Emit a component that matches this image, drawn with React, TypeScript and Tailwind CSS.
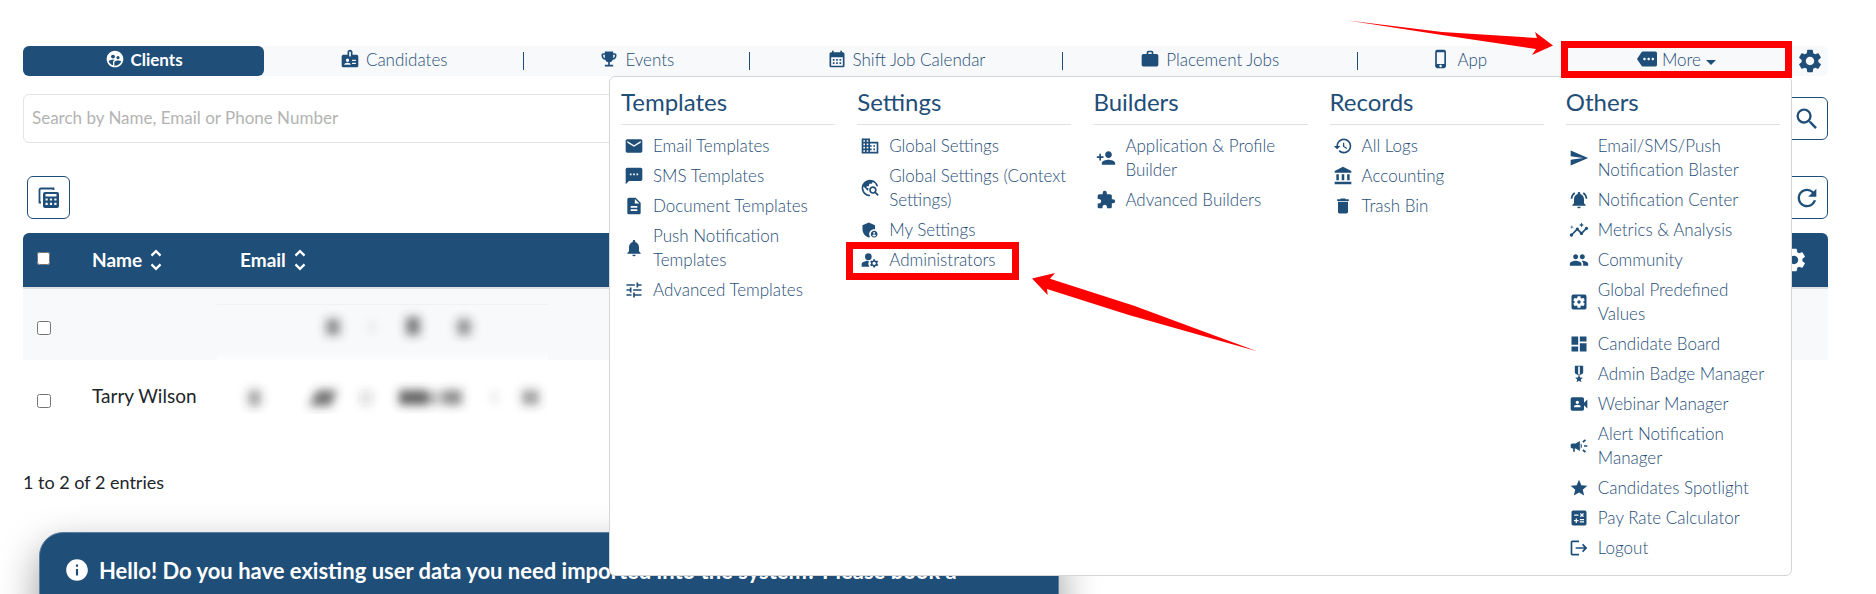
import { useState, type ComponentType, type ReactNode } from "react";
import {
  MdAccountBalance,
  MdAdminPanelSettings,
  MdCalculate,
  MdCalendarMonth,
  MdCampaign,
  MdDashboard,
  MdDelete,
  MdDescription,
  MdDomain,
  MdEmail,
  MdEmojiEvents,
  MdExtension,
  MdHistory,
  MdInfo,
  MdInsights,
  MdLogout,
  MdManageAccounts,
  MdMilitaryTech,
  MdMore,
  MdNotifications,
  MdNotificationsActive,
  MdPeople,
  MdPersonAdd,
  MdPhoneIphone,
  MdRefresh,
  MdSearch,
  MdSend,
  MdSettings,
  MdSettingsApplications,
  MdSms,
  MdStar,
  MdSupervisedUserCircle,
  MdTravelExplore,
  MdTune,
  MdUnfoldMore,
  MdVideoCameraFront,
  MdWork
} from "react-icons/md";

type IconType = ComponentType<{ className?: string }>;

type MenuLink = {
  label: string;
  icon: IconType;
  highlighted?: boolean;
};

type MenuGroup = {
  title: string;
  links: MenuLink[];
};

const menuGroups: MenuGroup[] = [
  {
    title: "Templates",
    links: [
      { label: "Email Templates", icon: MdEmail },
      { label: "SMS Templates", icon: MdSms },
      { label: "Document Templates", icon: MdDescription },
      { label: "Push Notification\nTemplates", icon: MdNotifications },
      { label: "Advanced Templates", icon: MdTune }
    ]
  },
  {
    title: "Settings",
    links: [
      { label: "Global Settings", icon: MdDomain },
      { label: "Global Settings (Context\nSettings)", icon: MdTravelExplore },
      { label: "My Settings", icon: MdAdminPanelSettings },
      { label: "Administrators", icon: MdManageAccounts, highlighted: true }
    ]
  },
  {
    title: "Builders",
    links: [
      { label: "Application & Profile\nBuilder", icon: MdPersonAdd },
      { label: "Advanced Builders", icon: MdExtension }
    ]
  },
  {
    title: "Records",
    links: [
      { label: "All Logs", icon: MdHistory },
      { label: "Accounting", icon: MdAccountBalance },
      { label: "Trash Bin", icon: MdDelete }
    ]
  },
  {
    title: "Others",
    links: [
      { label: "Email/SMS/Push\nNotification Blaster", icon: MdSend },
      { label: "Notification Center", icon: MdNotificationsActive },
      { label: "Metrics & Analysis", icon: MdInsights },
      { label: "Community", icon: MdPeople },
      { label: "Global Predefined\nValues", icon: MdSettingsApplications },
      { label: "Candidate Board", icon: MdDashboard },
      { label: "Admin Badge Manager", icon: MdMilitaryTech },
      { label: "Webinar Manager", icon: MdVideoCameraFront },
      { label: "Alert Notification\nManager", icon: MdCampaign },
      { label: "Candidates Spotlight", icon: MdStar },
      { label: "Pay Rate Calculator", icon: MdCalculate },
      { label: "Logout", icon: MdLogout }
    ]
  }
];

export default function App() {
  const [menuOpen, setMenuOpen] = useState(true);

  return (
    <main className="h-screen overflow-hidden bg-white pt-[46px] pr-12 pl-[23px] font-[Lato,sans-serif] text-[17px] text-[#1f4e78]">
      <nav className="relative z-10 flex h-[30px] rounded-md bg-[#f7f9fb] leading-7">
        <a href="#clients" className="flex flex-[241] items-start justify-center gap-1.5 rounded-md bg-[#1f4e78] font-bold text-white">
          <MdSupervisedUserCircle className="mt-[3px] size-5" />
          Clients
        </a>
        <NavItem className="flex-[260]" icon={BadgeIcon} label="Candidates" divider />
        <NavItem className="flex-[226]" icon={MdEmojiEvents} label="Events" divider />
        <NavItem className="flex-[312]" icon={MdCalendarMonth} label="Shift Job Calendar" divider />
        <NavItem className="flex-[295]" icon={MdWork} label="Placement Jobs" divider />
        <NavItem className="flex-[203]" icon={MdPhoneIphone} label="App" />
        <div className="relative flex flex-[231]">
          <button
            type="button"
            aria-expanded={menuOpen}
            className="flex flex-1 items-start justify-center gap-[5px] font-light"
            onClick={() => setMenuOpen((open) => !open)}
          >
            <MdMore className="mt-[3px] size-5" />
            More
            <svg className="mt-3.5 h-[5px] w-2.5" viewBox="0 0 10 5" fill="currentColor" aria-hidden="true">
              <path d="M0 0h10L5 5z" />
            </svg>
          </button>
          <span className="pointer-events-none absolute inset-x-0 -top-[5px] -bottom-0.5 z-20 border-[7px] border-[#ff0000]" />
          <svg className="pointer-events-none absolute -top-[26px] -left-[213px] z-20 h-9 w-[205px]" viewBox="0 0 205 36" fill="#ff0000" aria-hidden="true">
            <path d="M0 .5 94 12l95 6-2-6 18 13.5L184 35l4-6L94 15z" />
          </svg>
        </div>
        <button type="button" aria-label="Menu settings" className="flex w-9 items-center justify-center">
          <MdSettings className="size-7" />
        </button>
        {menuOpen ? <MegaMenu /> : null}
      </nav>

      <form className="mt-[18px] flex items-center gap-2.5" onSubmit={(event) => event.preventDefault()}>
        <input
          type="search"
          aria-label="Search by Name, Email or Phone Number"
          placeholder="Search by Name, Email or Phone Number"
          className="h-[49px] min-w-0 flex-1 rounded-md border border-[#e2e4e6] px-2 pb-0.5 outline-none placeholder:text-[#b3b3b3] focus:border-[#1f4e78]"
        />
        <IconButton label="Search" submit>
          <MdSearch className="size-7" />
        </IconButton>
      </form>

      <div className="mt-[33px] flex justify-between pl-1">
        <IconButton label="Choose columns">
          <TableStackIcon className="size-6" />
        </IconButton>
        <IconButton label="Refresh">
          <MdRefresh className="size-7" />
        </IconButton>
      </div>

      <table className="mt-3.5 w-full table-fixed text-left text-[19px] leading-7">
        <thead>
          <tr className="h-[55px] border-b-2 border-[#dee2e6] bg-[#1f4e78] text-white">
            <th className="w-[57px] rounded-tl-md pl-3.5 align-middle">
              <input type="checkbox" aria-label="Select all clients" className="mb-2 size-[13px] align-middle" />
            </th>
            <th className="w-[148px] px-3">
              <SortButton label="Name" />
            </th>
            <th className="px-3">
              <SortButton label="Email" />
            </th>
            <th className="w-20 rounded-tr-md pr-5">
              <button type="button" aria-label="Table settings" className="ml-auto block">
                <MdSettings className="size-7" />
              </button>
            </th>
          </tr>
        </thead>
        <tbody className="text-[#212529]">
          <tr className="h-[72px] bg-[#f7f9fb]">
            <td className="pt-0.5 pl-3.5">
              <RowCheckbox label="Select first client" />
            </td>
            <td className="px-3" />
            <td className="relative px-3">
              <RedactedEmails />
            </td>
            <td />
          </tr>
          <tr className="h-[72px]">
            <td className="pt-1.5 pl-3.5">
              <RowCheckbox label="Select Tarry Wilson" />
            </td>
            <td className="px-3 whitespace-nowrap">Tarry Wilson</td>
            <td />
            <td />
          </tr>
        </tbody>
      </table>

      <p className="mt-[38px] text-lg leading-6 text-[#212529]">1 to 2 of 2 entries</p>

      <section className="mt-[38px] ml-4 flex min-h-40 w-[1020px] items-start gap-[9px] rounded-3xl border border-[#5b7f9f] bg-[#1f4e78] px-6 pt-6 text-white shadow-[0_16px_40px_rgba(0,0,0,0.4)]">
        <MdInfo className="size-[26px] shrink-0" />
        <p className="text-[22px] leading-7 font-bold whitespace-nowrap">Hello! Do you have existing user data you need imported into the system? Please book a</p>
      </section>
    </main>
  );
}

function NavItem({ className, icon: Icon, label, divider }: { className: string; icon: IconType; label: string; divider?: boolean }) {
  return (
    <div className={`flex items-center ${className}`}>
      <a href="#" className="flex h-full flex-1 items-start justify-center gap-1.5 font-light">
        <Icon className="mt-[3px] size-5" />
        {label}
      </a>
      {divider ? <span className="h-[18px] w-px bg-[#1f4e78]" /> : null}
    </div>
  );
}

function MegaMenu() {
  return (
    <div className="absolute top-full right-9 grid w-[1183px] grid-cols-5 rounded-md border border-[#d3d6d9] bg-white pt-2.5 pb-3">
      {menuGroups.map((group) => (
        <div key={group.title} className="px-[11px]">
          <h2 className="border-b border-[#dee2e6] pb-[7px] text-2xl leading-[30px]">{group.title}</h2>
          <ul className="mt-1.5">
            {group.links.map(({ label, icon: Icon, highlighted }) => (
              <li key={label} className="relative">
                <a href="#" className="flex items-center gap-[9px] py-[3px] pl-[3px] leading-6 font-light whitespace-pre">
                  <Icon className="size-5 shrink-0" />
                  {label}
                </a>
                {highlighted ? <Callout /> : null}
              </li>
            ))}
          </ul>
        </div>
      ))}
    </div>
  );
}

function Callout() {
  return (
    <>
      <span className="pointer-events-none absolute -top-[3px] -left-[11px] h-[38px] w-[173px] border-[7px] border-[#ff0000]" />
      <svg className="pointer-events-none absolute top-7 left-[175px] h-20 w-[226px]" viewBox="0 0 226 80" fill="#ff0000" aria-hidden="true">
        <path d="M0 5.5 23 0l-5 5.700 84 27 123 45.500-129-36.500L15 16l.7 6z" />
      </svg>
    </>
  );
}

function IconButton({ label, submit, children }: { label: string; submit?: boolean; children: ReactNode }) {
  return (
    <button
      type={submit ? "submit" : "button"}
      aria-label={label}
      className="flex size-[43px] shrink-0 items-center justify-center rounded-md border border-[#1f4e78] bg-white"
    >
      {children}
    </button>
  );
}

function SortButton({ label }: { label: string }) {
  return (
    <button type="button" className="flex items-center font-bold">
      {label}
      <MdUnfoldMore className="size-7" />
    </button>
  );
}

function RowCheckbox({ label }: { label: string }) {
  return <input type="checkbox" aria-label={label} className="size-3.5 align-middle" />;
}

// Smudges that stand in for the hidden addresses of both rows.
function RedactedEmails() {
  return (
    <svg className="pointer-events-none absolute top-3.5 -left-[11px] h-[111px] w-[331px]" viewBox="0 0 331 111" aria-hidden="true">
      <defs>
        <filter id="smudge" x="-50%" y="-50%" width="200%" height="200%">
          <feGaussianBlur stdDeviation="5" />
        </filter>
        <linearGradient id="fade" x1="0" y1="0" x2="0" y2="1">
          <stop offset="0" stopColor="#fff" stopOpacity="0" />
          <stop offset="1" stopColor="#fff" />
        </linearGradient>
      </defs>
      <path d="M0 1.500h331" stroke="#eff1f3" />
      <rect y="48" width="331" height="12" fill="url(#fade)" />
      <g fill="#333" filter="url(#smudge)">
        <rect x="109" y="16" width="14" height="16" opacity=".55" />
        <rect x="152" y="18" width="6" height="12" opacity=".08" />
        <rect x="189" y="14" width="14" height="18" opacity=".64" />
        <rect x="240" y="16" width="14" height="16" opacity=".5" />
        <rect x="31" y="87" width="13" height="16" opacity=".44" />
        <path d="M92 103l8-16h20l-6 16z" opacity=".68" />
        <rect x="143" y="88" width="12" height="14" opacity=".16" />
        <rect x="182" y="87" width="28" height="15" opacity=".74" />
        <rect x="206" y="88" width="16" height="14" opacity=".35" />
        <rect x="225" y="87" width="20" height="15" opacity=".55" />
        <rect x="275" y="89" width="5" height="12" opacity=".12" />
        <rect x="305" y="87" width="17" height="15" opacity=".46" />
      </g>
    </svg>
  );
}

function BadgeIcon({ className }: { className?: string }) {
  return (
    <svg className={className} viewBox="0 0 24 24" fill="currentColor" aria-hidden="true">
      <path
        fillRule="evenodd"
        d="M12 1a3 3 0 0 0-3 3v3H4a2 2 0 0 0-2 2v11a2 2 0 0 0 2 2h16a2 2 0 0 0 2-2V9a2 2 0 0 0-2-2h-5V4a3 3 0 0 0-3-3zm0 2a1 1 0 0 1 1 1v4a1 1 0 0 1-2 0V4a1 1 0 0 1 1-1zM9 11.500a2 2 0 1 1 0 4 2 2 0 0 1 0-4zM5 19c0-1.600 2-2.500 4-2.500s4 .9 4 2.500zM14.500 13H19v1.500h-4.500zM14.500 16.500H19V18h-4.500z"
      />
    </svg>
  );
}

function TableStackIcon({ className }: { className?: string }) {
  return (
    <svg className={className} viewBox="0 0 24 24" aria-hidden="true">
      <path d="M4 16.500H2.500V4A1.500 1.500 0 0 1 4 2.500h12.500V4" fill="none" stroke="currentColor" strokeWidth="1.800" />
      <path
        fill="currentColor"
        fillRule="evenodd"
        d="M8 6h12a2 2 0 0 1 2 2v12a2 2 0 0 1-2 2H8a2 2 0 0 1-2-2V8a2 2 0 0 1 2-2zm.5 2v2.500h11V8zm0 4.500v2h2.200v-2zm4.400 0v2h2.200v-2zm4.400 0v2h2.200v-2zm-8.800 4.200v2.200h2.200v-2.200zm4.400 0v2.200h2.200v-2.200zm4.400 0v2.200h2.200v-2.200z"
      />
    </svg>
  );
}
